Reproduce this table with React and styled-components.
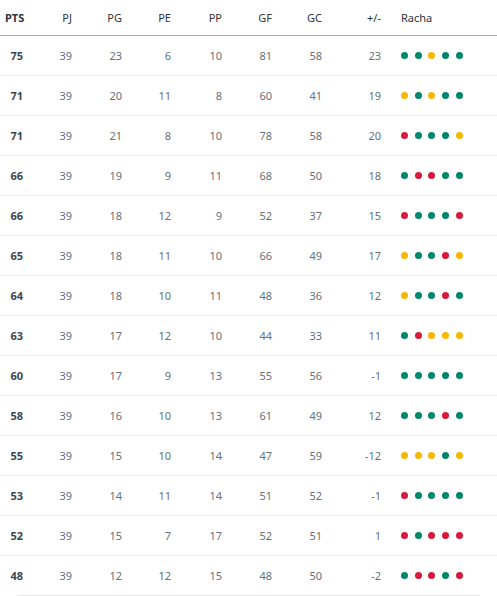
import React from "react";
import styled, { createGlobalStyle } from "styled-components";

const Global = createGlobalStyle`
  html, body { margin: 0; padding: 0; background: #fff; }
  body { font-family: "Noto Sans", "Open Sans", sans-serif; }
`;

const Table = styled.table`
  width: 497px;
  border-collapse: collapse;
  table-layout: fixed;
  font-size: 11px;
`;

const HeadCell = styled.th`
  height: 35px;
  padding: 0 5px;
  text-align: ${(p) => (p.$left ? "left" : "right")};
  padding-left: ${(p) => (p.$left ? "15px" : "5px")};
  font-weight: ${(p) => (p.$bold ? 700 : 400)};
  color: #2f3338;
  border-bottom: 1px solid #a3a9af;
  white-space: nowrap;
`;

const Row = styled.tr`
  &:last-child td { border-bottom: none; }
`;

const Cell = styled.td`
  height: 39px;
  padding: 0 5px;
  text-align: right;
  color: ${(p) => (p.$bold ? "#3c4650" : "#66707a")};
  font-weight: ${(p) => (p.$bold ? 700 : 400)};
  border-bottom: 1px solid #e9ecef;
`;

const StreakCell = styled.td`
  height: 39px;
  padding: 0 0 0 15px;
  border-bottom: 1px solid #e9ecef;
`;

const Dots = styled.div`
  display: flex;
  gap: 6.7px;
  align-items: center;
`;

const Dot = styled.span`
  width: 7px;
  height: 7px;
  border-radius: 50%;
  background: ${(p) => p.$c};
`;

const Bottom = styled.div`
  height: 1px;
  margin: 0 17px 0 17px;
  background: #e6e9ec;
`;

const COLORS = { G: "#00866b", Y: "#f6b700", R: "#d51a3d" };

const data = [
  [75, 39, 23, 6, 10, 81, 58, 23, "GGYGG"],
  [71, 39, 20, 11, 8, 60, 41, 19, "YGYGG"],
  [71, 39, 21, 8, 10, 78, 58, 20, "RGGGY"],
  [66, 39, 19, 9, 11, 68, 50, 18, "GRRGG"],
  [66, 39, 18, 12, 9, 52, 37, 15, "RGGGR"],
  [65, 39, 18, 11, 10, 66, 49, 17, "YGGRY"],
  [64, 39, 18, 10, 11, 48, 36, 12, "YGGRG"],
  [63, 39, 17, 12, 10, 44, 33, 11, "GRYYY"],
  [60, 39, 17, 9, 13, 55, 56, -1, "GGGGG"],
  [58, 39, 16, 10, 13, 61, 49, 12, "GGGRG"],
  [55, 39, 15, 10, 14, 47, 59, -12, "YYYGY"],
  [53, 39, 14, 11, 14, 51, 52, -1, "RGGGG"],
  [52, 39, 15, 7, 17, 52, 51, 1, "RGRRR"],
  [48, 39, 12, 12, 15, 48, 50, -2, "GRRGR"],
];

const widths = [28, 49, 50, 49, 51, 50, 50, 59, 111];
const heads = ["PTS", "PJ", "PG", "PE", "PP", "GF", "GC", "+/-"];

export default function App() {
  return (
    <>
      <Global />
      <Table>
        <colgroup>
          {widths.map((w, i) => (
            <col key={i} style={{ width: w }} />
          ))}
        </colgroup>
        <thead>
          <tr>
            {heads.map((h, i) => (
              <HeadCell key={h} $bold={i === 0}>
                {h}
              </HeadCell>
            ))}
            <HeadCell $left>Racha</HeadCell>
          </tr>
        </thead>
        <tbody>
          {data.map((r, i) => (
            <Row key={i}>
              {r.slice(0, 8).map((v, j) => (
                <Cell key={j} $bold={j === 0}>
                  {v}
                </Cell>
              ))}
              <StreakCell>
                <Dots>
                  {r[8].split("").map((c, k) => (
                    <Dot key={k} $c={COLORS[c]} />
                  ))}
                </Dots>
              </StreakCell>
            </Row>
          ))}
        </tbody>
      </Table>
      <Bottom />
    </>
  );
}
